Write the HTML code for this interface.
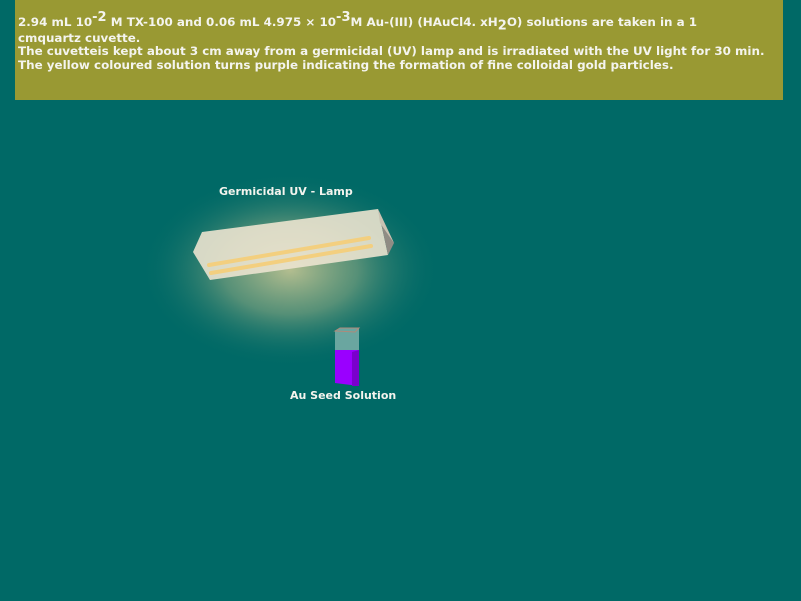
<!DOCTYPE html>
<html><head><meta charset="utf-8"><style>
body{margin:0;width:801px;height:601px;background:#006966;position:relative;overflow:hidden;font-family:"DejaVu Sans","Liberation Sans",sans-serif;font-weight:bold;color:#f4f4ee}
#box{position:absolute;left:15px;top:0;width:768px;height:100px;background:#999933}
#t{position:absolute;left:18px;top:16px;font-size:11.9px;line-height:13.5px;white-space:nowrap}
sup,sub{font-size:13px;line-height:0}
.l{position:absolute;font-size:11px}
</style></head><body>
<div id="box"></div>
<div id="t">2.94 mL 10<sup>-2</sup> M TX-100 and 0.06 mL 4.975 × 10<sup>-3</sup>M Au-(III) (HAuCl4. xH<sub>2</sub>O) solutions are taken in a 1<br><span style="display:inline-block;margin-top:2px">cmquartz cuvette.</span><br>The cuvetteis kept about 3 cm away from a germicidal (UV) lamp and is irradiated with the UV light for 30 min.<br>The yellow coloured solution turns purple indicating the formation of fine colloidal gold particles.</div>
<svg width="801" height="601" style="position:absolute;left:0;top:0">
<defs><radialGradient id="g" cx="290" cy="270" r="150" gradientUnits="userSpaceOnUse" gradientTransform="translate(290 270) scale(1 0.65) translate(-290 -270)">
<stop offset="0" stop-color="#e0d39a" stop-opacity="0.8"/><stop offset="0.45" stop-color="#bfc08c" stop-opacity="0.45"/><stop offset="1" stop-color="#006966" stop-opacity="0"/></radialGradient></defs>
<ellipse cx="290" cy="270" rx="160" ry="105" fill="url(#g)"/>
<polygon points="193,252 202,232 378,209 388,255 210,280" fill="#ebe3cf" fill-opacity="0.9"/>
<polygon points="378,209 394,243 388,255" fill="#8f8c84"/>
<polygon points="378,209 394,243 380,223" fill="#c9c2b2"/>
<line x1="209" y1="265" x2="369" y2="238" stroke="#f3cf7f" stroke-width="4" stroke-linecap="round"/>
<line x1="211" y1="273" x2="371" y2="246" stroke="#f3cf7f" stroke-width="4" stroke-linecap="round"/>
<polygon points="335,331 340,328 359,328 359,350 335,350" fill="#6aa6a0"/>
<polygon points="335,331 340,328 359,328 355,332" fill="none" stroke="#b08a7a" stroke-width="1"/>
<polygon points="335,350 359,350 359,386 335,383" fill="#9a00ff"/>
<polygon points="352,352 359,350 359,386 352,386" fill="#7a00cc"/>
</svg>
<div class="l" style="left:219px;top:185px">Germicidal UV - Lamp</div>
<div class="l" style="left:290px;top:389px">Au Seed Solution</div>
</body></html>
